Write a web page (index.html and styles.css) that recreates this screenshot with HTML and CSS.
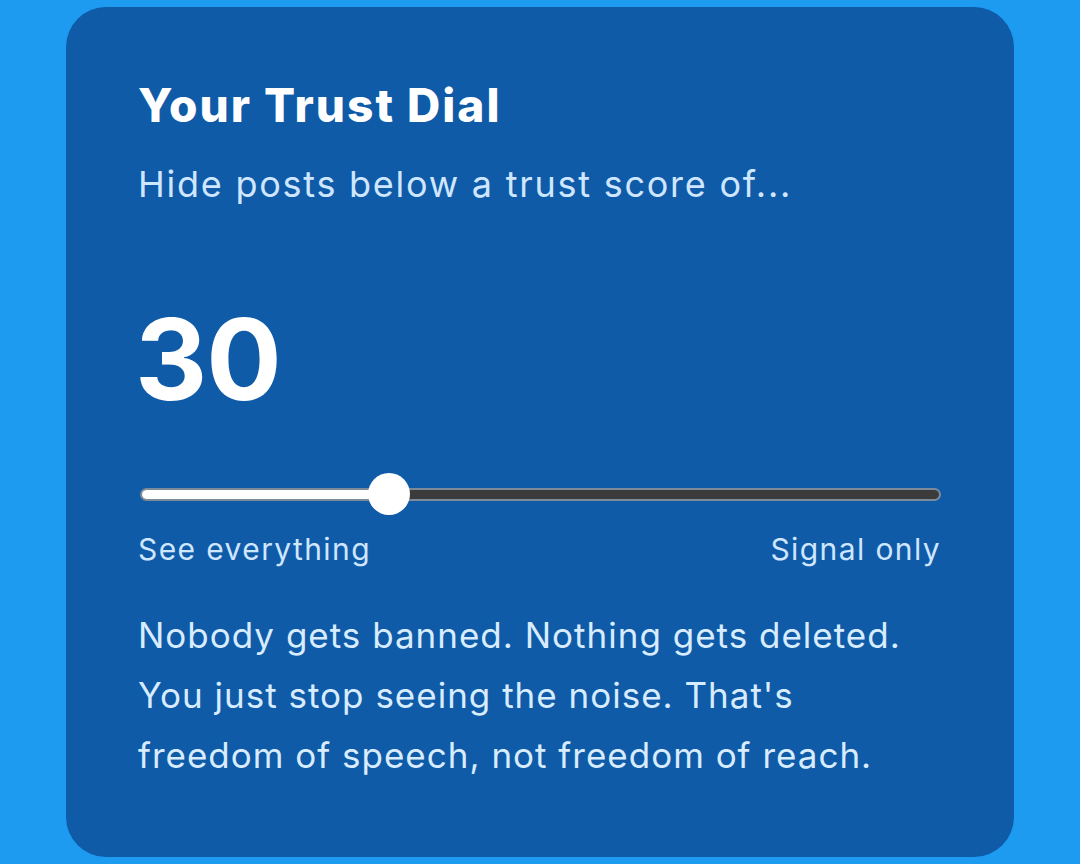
FILE: index.html
```html
<!DOCTYPE html>
<html>
<head>
<meta charset="utf-8">
<link rel="stylesheet" href="styles.css">
</head>
<body>
<div class="page">
  <section class="card">
    <h1 class="title">Your Trust Dial</h1>
    <p class="subtitle">Hide posts below a trust score of...</p>
    <div class="value">30</div>
    <div class="slider">
      <div class="track">
        <div class="fill" style="width: 248px"></div>
      </div>
      <div class="thumb" style="left: 228px"></div>
    </div>
    <div class="labels">
      <span>See everything</span>
      <span>Signal only</span>
    </div>
    <p class="note">Nobody gets banned. Nothing gets deleted. You just stop seeing the noise. That's freedom of speech, not freedom of reach.</p>
  </section>
</div>
</body>
</html>
```

FILE: styles.css
```css
html, body {
  margin: 0;
  padding: 0;
}
body {
  background: #1d9bf0;
  font-family: Inter, "Noto Sans", sans-serif;
  width: 1080px;
  height: 864px;
  overflow: hidden;
}
.page {
  padding: 7px 66px 0 66px;
}
.card {
  background: #0f5ba8;
  border-radius: 40px;
  height: 850px;
  box-sizing: border-box;
  padding: 72px 72px 0 72px;
  color: #d8ecff;
}
.title {
  margin: 0;
  font-size: 46px;
  font-weight: 800;
  line-height: 52px;
  color: #ffffff;
  letter-spacing: 2px;
}
.subtitle {
  margin: 31px 0 0 0;
  font-size: 36px;
  line-height: 44px;
  color: #cfe6ff;
  letter-spacing: 1.75px;
}
.value {
  margin: 97px 0 0 -3px;
  font-size: 112px;
  font-weight: 700;
  line-height: 112px;
  color: #ffffff;
  letter-spacing: -1px;
}
.slider {
  position: relative;
  margin: 58px 0 0 2px;
  width: 801px;
  height: 42px;
  display: flex;
  align-items: center;
}
.track {
  width: 100%;
  height: 13px;
  box-sizing: border-box;
  border: 2px solid #7c8a99;
  border-radius: 7px;
  background: #3b3b3b;
  overflow: hidden;
}
.fill {
  height: 100%;
  background: #ffffff;
}
.thumb {
  position: absolute;
  top: 0;
  width: 42px;
  height: 42px;
  border-radius: 50%;
  background: #ffffff;
}
.labels {
  margin-top: 15px;
  width: 803px;
  display: flex;
  justify-content: space-between;
  font-size: 30px;
  line-height: 38px;
  color: #cfe6ff;
  letter-spacing: 1.4px;
}
.note {
  margin: 37px 0 0 0;
  font-size: 35px;
  line-height: 60px;
  color: #d8ecff;
  letter-spacing: 1px;
  width: 795px;
}
```
